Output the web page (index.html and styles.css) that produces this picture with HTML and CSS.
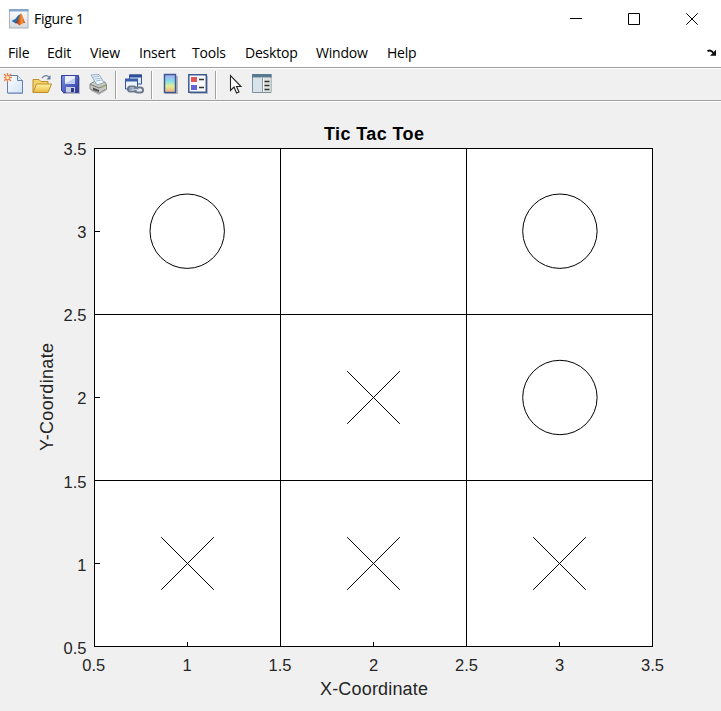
FILE: index.html
```html
<!DOCTYPE html>
<html lang="en">
<head>
<meta charset="utf-8">
<title>Figure 1</title>
<link rel="stylesheet" href="styles.css">
</head>
<body>
<div class="window">
<header class="titlebar">
  <svg class="logo" width="20" height="20" viewBox="0 0 20 20">
    <defs><linearGradient id="lg" x2="0" y2="1"><stop stop-color="#fff"/><stop offset="1" stop-color="#d5dade"/></linearGradient>
    <linearGradient id="peak"><stop stop-color="#7b201b"/><stop offset=".45" stop-color="#e36a22"/><stop offset=".65" stop-color="#f29a3c"/><stop offset="1" stop-color="#b33a1d"/></linearGradient></defs>
    <rect x=".5" y=".5" width="18.5" height="18.5" fill="url(#lg)" stroke="#a9b1ba"/>
    <path d="M0 0h19.5v2.500H0z" fill="#86a7cb"/>
    <path d="M2.500 12l4-2.200 2.300-3L12 4.500 9 14l-2.200.5z" fill="#2d6da6"/>
    <path d="M6.500 14c2.500-1 3.500-8 5.700-9.500 1.500 1 2.300 6 4.300 10-2.500-1.500-3.500 1.500-6.300 2-1-.8-1.700-3-3.700-2.500z" fill="url(#peak)"/>
  </svg>
  <span class="title">Figure 1</span>
  <div class="controls">
    <svg width="12" height="12" viewBox="0 0 12 12"><path d="M0 5.500h12"/></svg>
    <svg width="12" height="12" viewBox="0 0 12 12"><path d="M.5.5h11v11H.5z"/></svg>
    <svg width="12" height="12" viewBox="0 0 12 12"><path d="M.3.3l11.400 11.400M11.700.3L.3 11.700"/></svg>
  </div>
</header>
<nav class="menubar">
  <span>File</span><span>Edit</span><span>View</span><span>Insert</span><span>Tools</span><span>Desktop</span><span>Window</span><span>Help</span>
  <svg class="dock" width="10" height="8" viewBox="0 0 10 8"><path d="M.5 2.200Q3.500.2 6.500 4" fill="none" stroke="#111" stroke-width="1.900"/><path d="M9 .8v6H3z" fill="#111"/></svg>
</nav>
<div class="toolbar">
  <svg width="20" height="22" viewBox="0 0 20 22">
    <defs><linearGradient id="page" x2="1" y2="1"><stop stop-color="#fff"/><stop offset="1" stop-color="#cfe2f6"/></linearGradient></defs>
    <path d="M4 3h10l5 5v13H4z" fill="#aeb8c8"/><path d="M3.500 2.500h10l5 5v12.500h-15z" fill="url(#page)" stroke="#647fae"/><path d="M13.500 2.500v5h5" fill="#dce8f5" stroke="#647fae"/>
    <path d="M0 1l7 7M7 1L0 8M3.500 0v9M0 4.500h8" stroke="#e8814f" stroke-width="1.400"/><circle cx="3.500" cy="4.500" r="1.700" fill="#ffe2a4"/>
  </svg>
  <svg width="20" height="22" viewBox="0 0 20 22">
    <defs><linearGradient id="folder" x2="0" y2="1"><stop stop-color="#fff5a4"/><stop offset="1" stop-color="#eab83d"/></linearGradient></defs>
    <path d="M1 19.500V6.500h6l2 2h7v4" fill="#f4d469" stroke="#bd8d28"/><path d="M1 19.500L4.500 11h15L16 19.500z" fill="url(#folder)" stroke="#bd8d28"/>
    <path d="M10 5q3-4 7-1" fill="none" stroke="#7086a3" stroke-width="1.300"/><path d="M18.500 2v4.500h-4z" fill="#607c9f"/>
  </svg>
  <svg width="20" height="22" viewBox="0 0 20 22">
    <defs><linearGradient id="disk" x2="1" y2="1"><stop stop-color="#8190e8"/><stop offset="1" stop-color="#29369e"/></linearGradient></defs>
    <path d="M3 4h17v17H3z" fill="#b7b7c3"/><path d="M1.500 2.500h17v17h-15l-2-2z" fill="url(#disk)" stroke="#344198"/>
    <path d="M5 3h10v8H5z" fill="#e9efff"/><path d="M5 10.500L15 5v6H5z" fill="#bfcdf1"/><path d="M6 14h9v5.500H6z" fill="#c9d0df"/><path d="M11 15h3v4h-3z" fill="#28377f"/>
  </svg>
  <svg width="20" height="22" viewBox="0 0 20 22">
    <path d="M2 14l15-2 2 5-8 5-8-4z" fill="#c1c1c1"/><path d="M2 11l5-3 10 1 1.500 3v4L11 20l-9-4z" fill="#c7c7c4" stroke="#888"/><path d="M2.500 11.500l8.500 3.500 7-3" fill="none" stroke="#777"/>
    <path d="M3 2l8-.5 5 8-7 2.500z" fill="#eff7ff" stroke="#91a9c1"/><path d="M5 4l6-.5M6.500 6l6-.5M8 8l6-1" stroke="#9dbada"/><path d="M5 14.500l6 2.500v2l-6-2z" fill="#4f4f4f"/><path d="M14 14l3-1.500" stroke="#91b35c" stroke-width="1.500"/>
  </svg>
  <i class="sep"></i>
  <svg width="20" height="22" viewBox="0 0 20 22">
    <path d="M5.500 2h12v9h-12z" fill="#dce9f8" stroke="#35549d"/><path d="M5 1.500h13v3H5z" fill="#304f98"/><path d="M1.500 6.500h12V16h-12z" fill="#eaf2fb" stroke="#35549d"/><path d="M1 5.500h13v3H1z" fill="#3b5eaa"/>
    <g fill="none" stroke="#69788c" stroke-width="2"><rect x="4" y="13.500" width="8" height="5" rx="2.500"/><rect x="11" y="14.500" width="8" height="5" rx="2.500"/></g><path d="M8 16.500h7" stroke="#bfc9d4" stroke-width="1.400"/>
  </svg>
  <i class="sep"></i>
  <svg width="20" height="22" viewBox="0 0 20 22">
    <defs><linearGradient id="cb" x2="0" y2="1"><stop stop-color="#a9a5ee"/><stop offset=".35" stop-color="#86dcec"/><stop offset=".65" stop-color="#e3ef91"/><stop offset="1" stop-color="#f3aa86"/></linearGradient></defs>
    <path d="M5 3h13v18H5z" fill="#b6bac2"/><path d="M4.500 1.500h11v18h-11z" fill="url(#cb)" stroke="#3c5992" stroke-width="1.500"/>
  </svg>
  <svg width="20" height="22" viewBox="0 0 20 22">
    <path d="M2 3h18v18H2z" fill="#b6bac2"/><path d="M.8 1.800h17.500v17.500H.8z" fill="#f8fbff" stroke="#3c5992" stroke-width="1.500"/><path d="M3 4h6v5H3z" fill="#df5555"/><path d="M3 12h6v5H3z" fill="#6464df"/><path d="M11 6.500h5M11 14.500h5" stroke="#333" stroke-width="1.400"/>
  </svg>
  <i class="sep"></i>
  <svg width="20" height="22" viewBox="0 0 20 22"><path d="M6.500 2.500v15l3.500-3.500 2.500 6 2.500-1-2.500-5.500h4.500z" fill="#fff" stroke="#222" stroke-width="1.100"/></svg>
  <svg width="20" height="22" viewBox="0 0 20 22">
    <path d="M.5 1.500h18.500v18H.5z" fill="#f7f9fa" stroke="#7890a0"/><path d="M0 1h19.500v3.500H0z" fill="#58798f"/><path d="M1 5h9v14H1z" fill="#d7e3e9"/><path d="M10.500 5v14.500" stroke="#879aa6"/><path d="M12 5h6.500v14H12z" fill="#e2e2dc"/><path d="M12.500 8.500h5M12.500 12.500h5M12.500 16.500h5" stroke="#333" stroke-width="1.300"/>
  </svg>
</div>
<main class="figure">
<svg class="plot" width="721" height="609" viewBox="0 102 721 609">
  <path d="M94 148h559v499H94z" fill="#fff"/>
  <path class="grid" d="M94.500 148.500h558v498h-558zM280.500 148.500v498M466.500 148.500v498M94.500 314.500h558M94.500 480.500h558M94.500 231.500h5M94.500 397.500h5M94.500 563.500h5M187.500 646.500v-5M373.500 646.500v-5M559.500 646.500v-5"/>
  <g class="marks">
    <circle cx="187.200" cy="231.200" r="37.200"/><circle cx="559.900" cy="231.200" r="37.200"/><circle cx="559.900" cy="397.500" r="37.200"/>
    <path d="M347.200 371.200l52.600 52.600m0-52.600l-52.600 52.600M161.200 537.200l52.600 52.600m0-52.600l-52.600 52.600M347.200 537.200l52.600 52.600m0-52.600l-52.600 52.600M533.200 537.200l52.600 52.600m0-52.600l-52.600 52.600"/>
  </g>
  <text class="heading" x="374" y="140" textLength="100">Tic Tac Toe</text>
  <g class="ylabels"><text x="86.500" y="155">3.5</text><text x="86.500" y="238">3</text><text x="86.500" y="321">2.5</text><text x="86.500" y="404">2</text><text x="86.500" y="488">1.5</text><text x="86.500" y="571">1</text><text x="86.500" y="654">0.5</text></g>
  <g class="xlabels"><text x="93.800" y="671">0.5</text><text x="187" y="671">1</text><text x="280" y="671">1.5</text><text x="373.500" y="671">2</text><text x="466.500" y="671">2.5</text><text x="559.500" y="671">3</text><text x="652.500" y="671">3.5</text>
  <text class="axis" x="374" y="695" textLength="108">X-Coordinate</text><text class="axis" transform="translate(53 397) rotate(-90)" textLength="108">Y-Coordinate</text></g>
</svg>
</main>
</div>
</body>
</html>
```

FILE: styles.css
```css
* { box-sizing: border-box; }
body { margin: 0; background: #f0f0f0; overflow: hidden; }
svg { display: block; flex: none; }
.window { width: 721px; height: 711px; display: flex; flex-direction: column; font-family: "Open Sans", "Noto Sans", sans-serif; color: #000; }
.titlebar { height: 36px; background: #fff; display: flex; align-items: center; padding: 1px 23px 0 9px; }
.title { margin-left: 5px; font-size: 14px; letter-spacing: -0.3px; }
.controls { margin-left: auto; display: flex; gap: 46px; }
.controls svg { fill: none; stroke: #000; stroke-width: 1; }
.menubar { height: 31px; background: #fff; display: grid; grid-template-columns: 39px 43px 49px 53px 53px 71px 71px 1fr auto; align-items: center; padding: 2px 4px 0 8px; font-size: 14px; letter-spacing: -0.2px; }
.dock { align-self: start; margin-top: 11px; }
.toolbar { height: 35px; border-top: 1px solid #a0a0a0; border-bottom: 1px solid #fff; box-shadow: inset 0 1px #fff, inset 0 -1px #a0a0a0; display: flex; align-items: center; gap: 8px; padding: 0 4px 1px; }
.sep { width: 2px; height: 28px; margin: 2px -1px 0; border-left: 1px solid #a0a0a0; border-right: 1px solid #fff; }
.figure { flex: 1; }
.plot { font-family: "Liberation Sans", Arial, sans-serif; font-size: 16.5px; fill: #262626; }
.grid { fill: none; stroke: #000; shape-rendering: crispEdges; }
.marks { fill: none; stroke: #000; stroke-width: 1; }
.heading { font-size: 18px; font-weight: bold; fill: #000; text-anchor: middle; }
.ylabels { text-anchor: end; }
.xlabels { text-anchor: middle; }
.axis { font-size: 18px; }
```
